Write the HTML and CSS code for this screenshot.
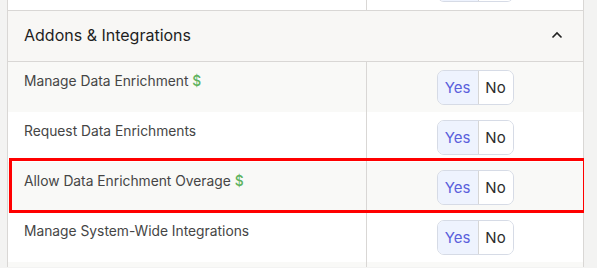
FILE: index.html
```html
<!DOCTYPE html>
<html lang="en">
<head>
    <meta charset="UTF-8">
    <meta name="viewport" content="width=device-width, initial-scale=1.0">
    <title>Permissions</title>
    <link rel="stylesheet" href="styles.css">
</head>
<body>

<div class="panel">
    <div class="row tail">
        <div class="label"></div>
        <div class="choice">
            <div class="toggle"><span class="yes">Yes</span><span class="no">No</span></div>
        </div>
    </div>

    <div class="section-head">
        <span>Addons &amp; Integrations</span>
        <svg class="chevron" width="12" height="8" viewBox="0 0 12 8">
            <path d="M1.5 6.5 L6 2 L10.5 6.5" fill="none" stroke="#222" stroke-width="1.6"/>
        </svg>
    </div>

    <div class="row alt">
        <div class="label">Manage Data Enrichment <span class="paid">$</span></div>
        <div class="choice">
            <div class="toggle"><span class="yes">Yes</span><span class="no">No</span></div>
        </div>
    </div>
    <div class="row">
        <div class="label">Request Data Enrichments</div>
        <div class="choice">
            <div class="toggle"><span class="yes">Yes</span><span class="no">No</span></div>
        </div>
    </div>
    <div class="row alt marked">
        <div class="label">Allow Data Enrichment Overage <span class="paid">$</span></div>
        <div class="choice">
            <div class="toggle"><span class="yes">Yes</span><span class="no">No</span></div>
        </div>
    </div>
    <div class="row">
        <div class="label">Manage System-Wide Integrations</div>
        <div class="choice">
            <div class="toggle"><span class="yes">Yes</span><span class="no">No</span></div>
        </div>
    </div>
    <div class="row alt short">
        <div class="label"></div>
        <div class="choice"></div>
    </div>
</div>

</body>
</html>
```

FILE: styles.css
```css
body {
    margin: 0;
    padding-left: 7px;
    width: 577px;
    height: 268px;
    overflow: hidden;
    background-color: #f3f3f2;
    font-family: Inter, "Noto Sans", Arial, sans-serif;
}

.panel {
    background-color: #fff;
    border-left: 1px solid #d9d7d5;
    border-right: 1px solid #d9d7d5;
}

.row {
    display: grid;
    grid-template-columns: 358px 1fr;
    grid-template-rows: 50px;
    background-color: #fff;
}

.row.alt {
    background-color: #f9f9f7;
}

/* bottom of the row above the section, cut by the frame */
.row.tail {
    grid-template-rows: 10px;
    height: 10px;
    overflow: hidden;
}

.row.tail .choice {
    align-items: flex-start;
}

.row.tail .toggle {
    margin-top: -33px;
}

.row.short {
    grid-template-rows: 5px;
}

.label {
    padding: 11px 16px 0;
    font-size: 13.8px;
    color: #454545;
}

.paid {
    color: #5fb35f;
    font-weight: 500;
}

.choice {
    border-left: 1px solid #d9d7d5;
    display: flex;
    justify-content: center;
    align-items: center;
}

.toggle {
    display: flex;
    flex-shrink: 0;
    height: 35px;
    border: 1px solid #d6dbe6;
    border-radius: 7px;
    overflow: hidden;
    font-size: 15px;
    box-sizing: border-box;
}

.toggle span {
    display: flex;
    align-items: center;
    justify-content: center;
}

.yes {
    width: 40px;
    background-color: #eef3fe;
    color: #5a5fdc;
    border-right: 1px solid #d6d6d6;
}

.no {
    width: 34px;
    background-color: #fff;
    color: #2c2c2c;
}

.section-head {
    display: flex;
    justify-content: space-between;
    align-items: center;
    height: 52px;
    padding: 0 20px 3px 16px;
    box-sizing: border-box;
    background-color: #f8f7f5;
    border-top: 1px solid #d9d7d5;
    border-bottom: 1px solid #d9d7d5;
    font-size: 16px;
    color: #1e1e1e;
}

.marked {
    position: relative;
}

.marked::after {
    content: "";
    position: absolute;
    z-index: 1;
    top: -4px;
    left: 1px;
    right: -3px;
    bottom: -1px;
    border: 3px solid #f00;
    pointer-events: none;
}
```
